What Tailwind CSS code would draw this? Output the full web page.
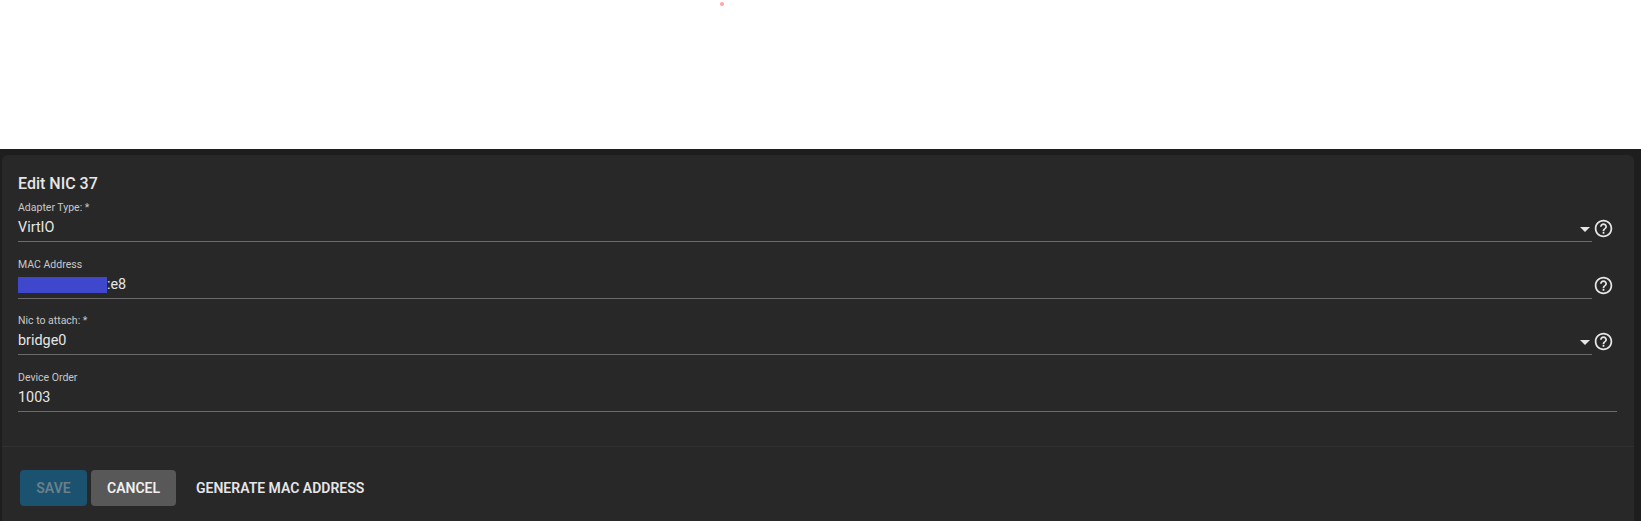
<!DOCTYPE html>
<html lang="en">
<head>
    <meta charset="UTF-8">
    <title>Edit NIC</title>
    <script src="https://cdn.jsdelivr.net/npm/@tailwindcss/browser@4"></script>
</head>
<body class="bg-white h-[521px] overflow-hidden font-['Roboto',sans-serif]">
    <!-- Blank page area above the form -->
    <div class="h-[149px] bg-white relative">
        <span class="absolute left-[720px] top-[2px] w-1 h-1 rounded-full bg-red-300"></span>
    </div>

    <!-- Form area -->
    <div class="h-[372px] bg-[#1e1e1e] pl-[2px] pr-[7px] pt-[6px]">
        <div class="h-full bg-[#282828] rounded-t-md">
            <div class="px-4 pt-[19px]">
                <h2 class="text-base leading-5 font-medium text-[#e6e6e6] mb-[2px]">Edit NIC 37</h2>

                <!-- Adapter Type -->
                <div class="flex items-end h-[46px]">
                    <div class="w-[1574px] h-[46px] border-b border-[#6b6b6b] pt-[5px]">
                        <label class="block text-[10.5px] leading-[14px] text-[#c8c8c8]">Adapter Type: *</label>
                        <div class="flex items-center justify-between h-[26px]">
                            <span class="text-[14.4px] text-[#e6e6e6]">VirtIO</span>
                            <span class="w-0 h-0 mr-[2px] mt-[2px] border-x-[5px] border-x-transparent border-t-[5px] border-t-[#e6e6e6]"></span>
                        </div>
                    </div>
                    <svg class="w-[21px] h-[21px] ml-[1px] mb-[3px] text-[#e6e6e6]" viewBox="0 0 24 24" fill="currentColor"><path d="M11 18h2v-2h-2v2zm1-16C6.48 2 2 6.48 2 12s4.48 10 10 10 10-4.48 10-10S17.52 2 12 2zm0 18c-4.41 0-8-3.59-8-8s3.59-8 8-8 8 3.59 8 8-3.59 8-8 8zm0-14c-2.21 0-4 1.79-4 4h2c0-1.1.9-2 2-2s2 .9 2 2c0 2-3 1.75-3 5h2c0-2.25 3-2.5 3-5 0-2.21-1.79-4-4-4z"/></svg>
                </div>

                <!-- MAC Address -->
                <div class="flex items-end h-[46px] mt-[11px]">
                    <div class="w-[1574px] h-[46px] border-b border-[#6b6b6b] pt-[5px]">
                        <label class="block text-[10.5px] leading-[14px] text-[#c8c8c8]">MAC Address</label>
                        <div class="flex items-center h-[26px]">
                            <span class="w-[89px] h-4 bg-[#3f48cc]"></span>
                            <span class="text-[14.4px] text-[#e6e6e6]">:e8</span>
                        </div>
                    </div>
                    <svg class="w-[21px] h-[21px] ml-[1px] mb-[3px] text-[#e6e6e6]" viewBox="0 0 24 24" fill="currentColor"><path d="M11 18h2v-2h-2v2zm1-16C6.48 2 2 6.48 2 12s4.48 10 10 10 10-4.48 10-10S17.52 2 12 2zm0 18c-4.41 0-8-3.59-8-8s3.59-8 8-8 8 3.59 8 8-3.59 8-8 8zm0-14c-2.21 0-4 1.79-4 4h2c0-1.1.9-2 2-2s2 .9 2 2c0 2-3 1.75-3 5h2c0-2.25 3-2.5 3-5 0-2.21-1.79-4-4-4z"/></svg>
                </div>

                <!-- Nic to attach -->
                <div class="flex items-end h-[46px] mt-[10px]">
                    <div class="w-[1574px] h-[46px] border-b border-[#6b6b6b] pt-[5px]">
                        <label class="block text-[10.5px] leading-[14px] text-[#c8c8c8]">Nic to attach: *</label>
                        <div class="flex items-center justify-between h-[26px]">
                            <span class="text-[14.4px] text-[#e6e6e6]">bridge0</span>
                            <span class="w-0 h-0 mr-[2px] mt-[2px] border-x-[5px] border-x-transparent border-t-[5px] border-t-[#e6e6e6]"></span>
                        </div>
                    </div>
                    <svg class="w-[21px] h-[21px] ml-[1px] mb-[3px] text-[#e6e6e6]" viewBox="0 0 24 24" fill="currentColor"><path d="M11 18h2v-2h-2v2zm1-16C6.48 2 2 6.48 2 12s4.48 10 10 10 10-4.48 10-10S17.52 2 12 2zm0 18c-4.41 0-8-3.59-8-8s3.59-8 8-8 8 3.59 8 8-3.59 8-8 8zm0-14c-2.21 0-4 1.79-4 4h2c0-1.1.9-2 2-2s2 .9 2 2c0 2-3 1.75-3 5h2c0-2.25 3-2.5 3-5 0-2.21-1.79-4-4-4z"/></svg>
                </div>

                <!-- Device Order -->
                <div class="w-[1599px] h-[46px] mt-[11px] border-b border-[#6b6b6b] pt-[5px]">
                    <label class="block text-[10.5px] leading-[14px] text-[#c8c8c8]">Device Order</label>
                    <div class="flex items-center h-[26px]">
                        <span class="text-[14.4px] text-[#e6e6e6]">1003</span>
                    </div>
                </div>
            </div>

            <!-- Actions -->
            <div class="mt-[34px] border-t border-[#303030] px-[18px] pt-[23px] flex items-center">
                <button class="w-[67px] h-9 rounded bg-[#1a526f] text-sm font-semibold text-[#6b7f8a]">SAVE</button>
                <button class="w-[85px] h-9 ml-1 rounded bg-[#585858] text-sm font-semibold text-[#f0f0f0]">CANCEL</button>
                <button class="h-9 ml-5 text-sm font-semibold text-[#e6e6e6]">GENERATE MAC ADDRESS</button>
            </div>
        </div>
    </div>
</body>
</html>
